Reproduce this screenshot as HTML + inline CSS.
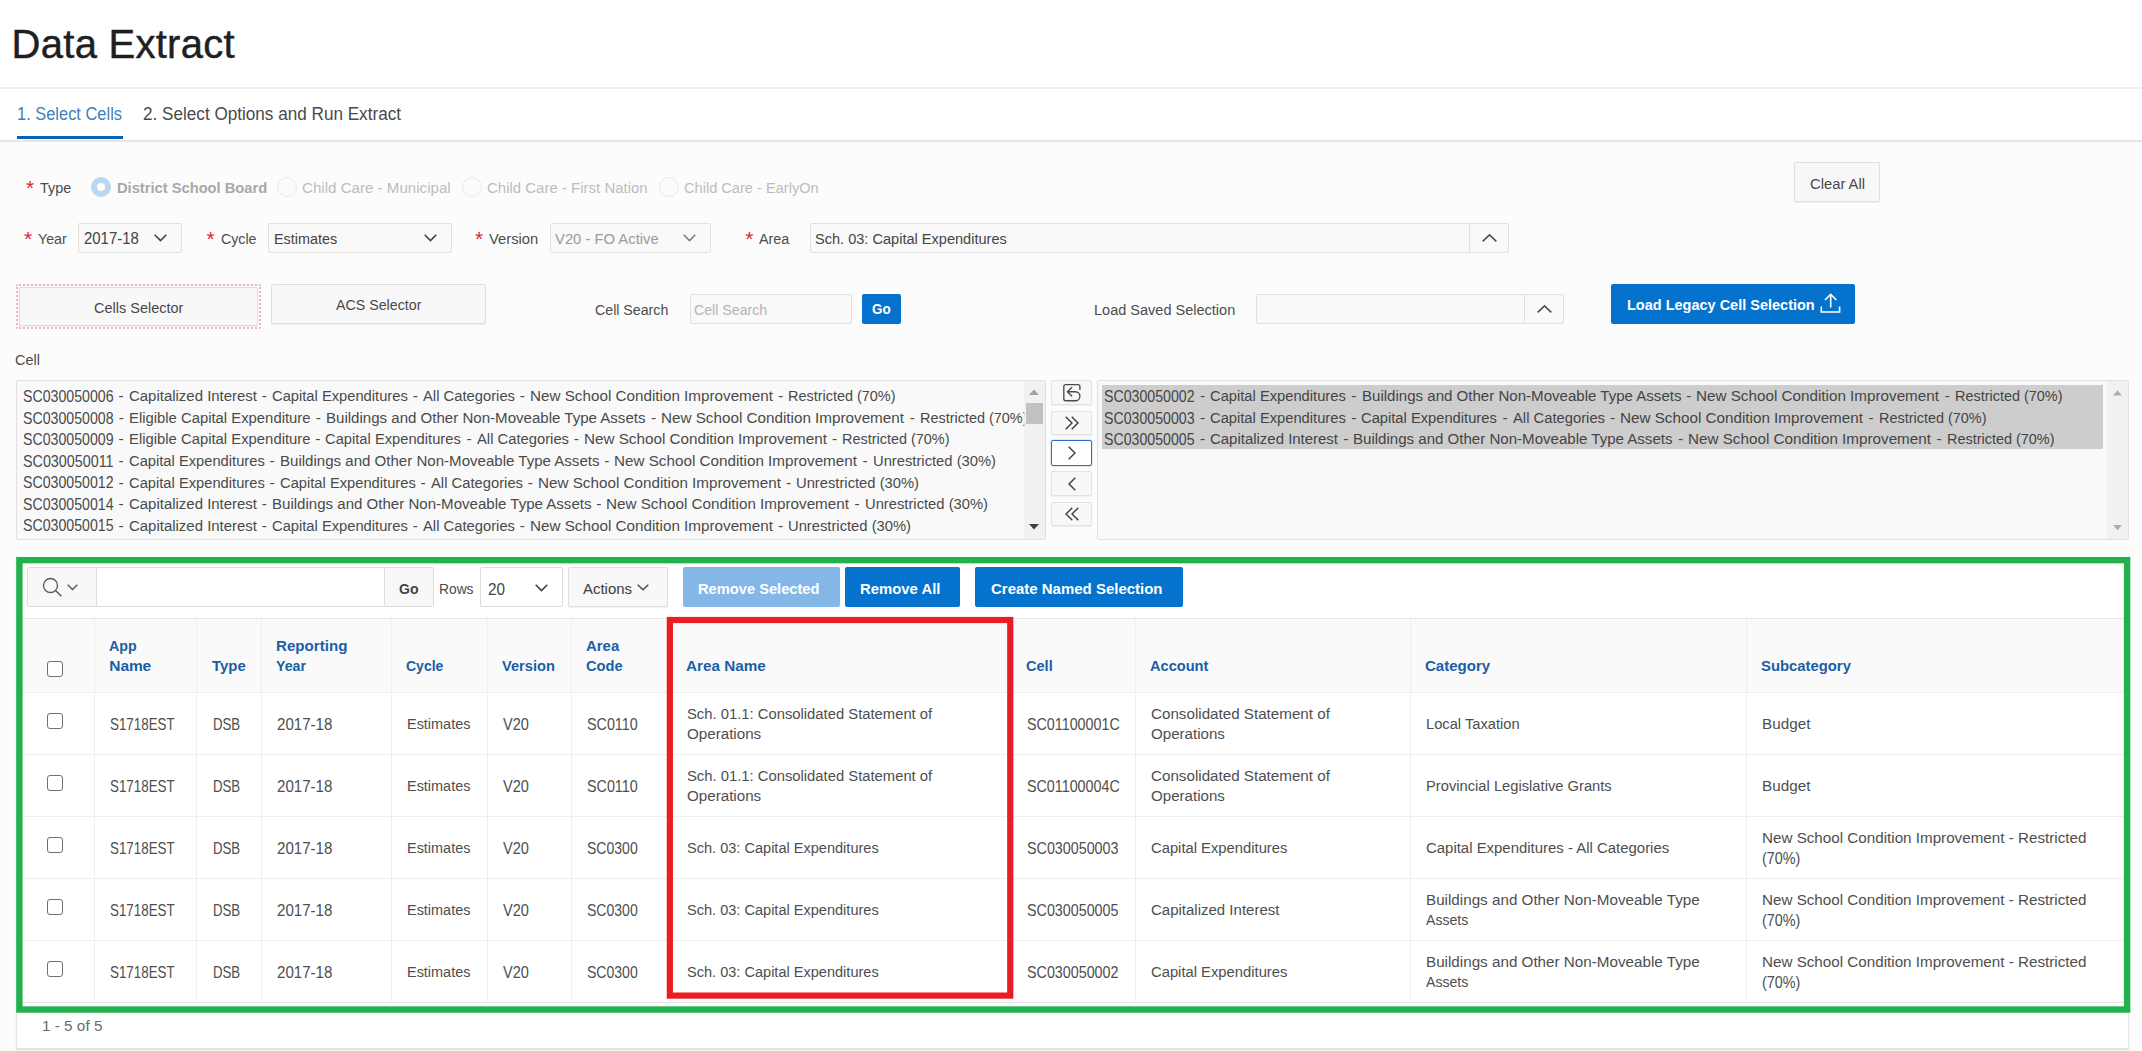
<!DOCTYPE html>
<html lang="en">
<head>
<meta charset="utf-8">
<title>Data Extract</title>
<style>
*{box-sizing:border-box;margin:0;padding:0}
html,body{width:2142px;height:1051px;overflow:hidden;background:#fff}
body{font-family:"Liberation Sans",sans-serif;color:#3c3c3c;font-size:15px;position:relative}
.a{position:absolute}
.t{position:absolute;white-space:nowrap;line-height:20px;height:20px}
.box{position:absolute;border:1px solid #e0e0e0;background:#f9f9f9;border-radius:2px}
.btn{position:absolute;border:1px solid #dedede;background:#f8f8f8;border-radius:2px;box-shadow:0 1px 1px rgba(0,0,0,.06)}
.hot{position:absolute;background:#0572ce;border-radius:2px}
.radio{position:absolute;width:20px;height:20px;border-radius:50%;border:1px solid #e9e9e9;background:#fbfbfb}
svg{position:absolute;overflow:visible}
.vl{position:absolute;width:1px;background:#efefef}
.hl{position:absolute;height:1px;background:#eeeeee}
.cb{position:absolute;width:16.6px;height:16.6px;border:1.4px solid #707070;border-radius:3px;background:#fff}
</style>
</head>
<body>

<!-- page header -->
<div class="a" style="left:0;top:87px;width:2142px;height:2px;background:#efefef"></div>
<div class="a" style="left:0;top:139.5px;width:2142px;height:2px;background:#e6e6e6"></div>
<div class="a" style="left:17px;top:136.2px;width:105.6px;height:3px;background:#0b62b3"></div>
<div class="a" style="left:0;top:141.5px;width:2142px;height:910px;background:#fcfcfc"></div>

<!-- row 1: type radios -->
<div class="radio" style="left:91px;top:177px;border:6.4px solid #b9d7f1;background:#fff"></div>
<div class="radio" style="left:277px;top:177px"></div>
<div class="radio" style="left:461.5px;top:177px"></div>
<div class="radio" style="left:658.5px;top:177px"></div>
<div class="btn" style="left:1794px;top:162px;width:86px;height:40px"></div>

<!-- row 2: selects -->
<div class="box" style="left:78px;top:223px;width:104px;height:30px"></div>
<svg style="left:154px;top:234px" width="13" height="8" viewBox="0 0 13 8"><path d="M0.7 0.7 L6.5 6.6 L12.3 0.7" fill="none" stroke="#3f3f3f" stroke-width="1.5"/></svg>
<div class="box" style="left:268px;top:223px;width:183.5px;height:30px"></div>
<svg style="left:424px;top:234px" width="13" height="8" viewBox="0 0 13 8"><path d="M0.7 0.7 L6.5 6.6 L12.3 0.7" fill="none" stroke="#3f3f3f" stroke-width="1.5"/></svg>
<div class="box" style="left:550px;top:223px;width:161px;height:30px;border-color:#e4e4e4"></div>
<svg style="left:683px;top:234px" width="13" height="8" viewBox="0 0 13 8"><path d="M0.7 0.7 L6.5 6.6 L12.3 0.7" fill="none" stroke="#7a7a7a" stroke-width="1.5"/></svg>
<div class="box" style="left:809.5px;top:223px;width:699.5px;height:30px"></div>
<div class="a" style="left:1469px;top:224px;width:1px;height:28px;background:#dedede"></div>
<svg style="left:1482px;top:234px" width="15" height="8" viewBox="0 0 15 8"><path d="M0.7 7.4 L7.5 0.9 L14.3 7.4" fill="none" stroke="#4a4a4a" stroke-width="1.5"/></svg>

<!-- row 3 -->
<div class="a" style="left:15.5px;top:284px;width:245px;height:45px;border:2px dotted #f4b0c3;border-radius:2px"></div>
<div class="btn" style="left:18.5px;top:287px;width:239px;height:39px"></div>
<div class="btn" style="left:271px;top:284px;width:215px;height:40px"></div>
<div class="box" style="left:689.5px;top:294px;width:162px;height:30px"></div>
<div class="hot" style="left:861.5px;top:294px;width:39.5px;height:30px"></div>
<div class="box" style="left:1255.5px;top:294px;width:308px;height:30px"></div>
<div class="a" style="left:1524px;top:295px;width:1px;height:28px;background:#dedede"></div>
<svg style="left:1536.5px;top:305px" width="15" height="8" viewBox="0 0 15 8"><path d="M0.7 7.4 L7.5 0.9 L14.3 7.4" fill="none" stroke="#4a4a4a" stroke-width="1.5"/></svg>
<div class="hot" style="left:1610.5px;top:283.5px;width:244.5px;height:40.5px"></div>
<svg style="left:1819.5px;top:293px" width="21" height="20" viewBox="0 0 21 20"><path d="M10.7 14.6 V1.4 M5 7 L10.7 1.3 L16.4 7 M1.3 13.4 V19 H19.6 V13.4" fill="none" stroke="#fff" stroke-width="1.6"/></svg>

<!-- shuttle lists -->
<div class="box" style="left:15.5px;top:380px;width:1030.5px;height:160px;border-color:#e0e0e0"></div>
<div class="a" style="left:1024px;top:381px;width:21px;height:158px;background:#f1f1f1"></div>
<div class="a" style="left:1026px;top:402.5px;width:16.5px;height:21.5px;background:#c1c1c1"></div>
<svg style="left:1029px;top:389px" width="10" height="6" viewBox="0 0 10 6"><path d="M0 6 L5 0.5 L10 6 Z" fill="#a3a3a3"/></svg>
<svg style="left:1029px;top:524px" width="10" height="6" viewBox="0 0 10 6"><path d="M0 0 L5 5.5 L10 0 Z" fill="#404040"/></svg>

<div class="btn" style="left:1051.3px;top:380.4px;width:40.6px;height:24.6px;border-color:#e2e2e2"></div>
<div class="btn" style="left:1051.3px;top:410.6px;width:40.6px;height:24.4px;border-color:#e2e2e2"></div>
<div class="btn" style="left:1051.3px;top:440.4px;width:40.6px;height:25.2px;border:1.5px solid #2d6fbd;background:#fff;box-shadow:0 0 2px #8db8e8"></div>
<div class="btn" style="left:1051.3px;top:471.4px;width:40.6px;height:24.6px;border-color:#e2e2e2"></div>
<div class="btn" style="left:1051.3px;top:501.5px;width:40.6px;height:24.7px;border-color:#e2e2e2"></div>
<svg style="left:1062px;top:383px" width="20" height="20" viewBox="0 0 20 20"><path d="M17.9 6.5 V3.6 Q17.9 1.65 15.9 1.65 H3.8 Q1.8 1.65 1.8 3.6 V15.8 Q1.8 17.75 3.8 17.75 H13.4 A4.5 4.5 0 0 0 13.4 8.7 H5.6 M9.7 4.4 L5.4 8.7 L9.7 13" fill="none" stroke="#4a4a4a" stroke-width="1.35" stroke-linecap="round" stroke-linejoin="round"/></svg>
<svg style="left:1064.5px;top:415.5px" width="14" height="14" viewBox="0 0 14 14"><path d="M0.7 0.7 L7 7 L0.7 13.3 M6.7 0.7 L13 7 L6.7 13.3" fill="none" stroke="#3d3d3d" stroke-width="1.4"/></svg>
<svg style="left:1068px;top:446px" width="8" height="14" viewBox="0 0 8 14"><path d="M0.7 0.7 L7 7 L0.7 13.3" fill="none" stroke="#3d3d3d" stroke-width="1.4"/></svg>
<svg style="left:1067.5px;top:476.5px" width="8" height="14" viewBox="0 0 8 14"><path d="M7.3 0.7 L1 7 L7.3 13.3" fill="none" stroke="#3d3d3d" stroke-width="1.4"/></svg>
<svg style="left:1064.5px;top:507px" width="14" height="14" viewBox="0 0 14 14"><path d="M7.3 0.7 L1 7 L7.3 13.3 M13.3 0.7 L7 7 L13.3 13.3" fill="none" stroke="#3d3d3d" stroke-width="1.4"/></svg>

<div class="box" style="left:1097px;top:380px;width:1032px;height:160px;border-color:#e0e0e0"></div>
<div class="a" style="left:1101.5px;top:385px;width:1001.5px;height:64.4px;background:#cdcdcd"></div>
<div class="a" style="left:2107px;top:381px;width:21px;height:158px;background:#f1f1f1"></div>
<svg style="left:2113px;top:390px" width="9" height="5.5" viewBox="0 0 9 5.5"><path d="M0 5.5 L4.5 0.3 L9 5.5 Z" fill="#adadad"/></svg>
<svg style="left:2113px;top:525.3px" width="9" height="5.5" viewBox="0 0 9 5.5"><path d="M0 0 L4.5 5.2 L9 0 Z" fill="#adadad"/></svg>

<!-- report region -->
<div class="a" style="left:15.5px;top:556px;width:2113.5px;height:494px;background:#fff;border:1.5px solid #e8e8e8;border-top:none;border-bottom:2px solid #e2e2e2;box-shadow:0 1px 2px rgba(0,0,0,.06)"></div>
<!-- toolbar -->
<div class="box" style="left:27px;top:567.4px;width:407px;height:40px;background:#fff;border-color:#dcdcdc"></div>
<div class="a" style="left:28px;top:568.4px;width:69px;height:38px;background:#f8f8f8;border-right:1px solid #dcdcdc"></div>
<div class="a" style="left:384px;top:568.4px;width:49px;height:38px;background:#f8f8f8;border-left:1px solid #dcdcdc"></div>
<svg style="left:41.5px;top:578px" width="20" height="20" viewBox="0 0 20 20"><circle cx="8.5" cy="7.5" r="7" fill="none" stroke="#595959" stroke-width="1.3"/><path d="M13.5 12.5 L19.4 18.3" stroke="#595959" stroke-width="1.5" fill="none"/></svg>
<svg style="left:66.5px;top:584px" width="11" height="7" viewBox="0 0 11 7"><path d="M0.7 0.7 L5.5 5.6 L10.3 0.7" fill="none" stroke="#555" stroke-width="1.4"/></svg>
<div class="box" style="left:479.5px;top:567.4px;width:83.5px;height:40px;background:#fff;border-color:#dcdcdc"></div>
<svg style="left:535px;top:583.5px" width="13" height="8" viewBox="0 0 13 8"><path d="M0.7 0.7 L6.5 6.6 L12.3 0.7" fill="none" stroke="#3f3f3f" stroke-width="1.5"/></svg>
<div class="btn" style="left:568px;top:567.4px;width:99.5px;height:40px"></div>
<svg style="left:637px;top:584px" width="12" height="7" viewBox="0 0 12 7"><path d="M0.7 0.7 L6 5.8 L11.3 0.7" fill="none" stroke="#4a4a4a" stroke-width="1.4"/></svg>
<div class="hot" style="left:683px;top:567.3px;width:157px;height:40px;background:#84b7e7"></div>
<div class="hot" style="left:845px;top:567.3px;width:115px;height:40px"></div>
<div class="hot" style="left:975px;top:567.3px;width:208px;height:40px"></div>

<!-- table -->
<div class="a" style="left:23px;top:618.5px;width:2101px;height:73.5px;background:#fafafa"></div>
<div class="hl" style="left:23px;top:618px;width:2101px;background:#e6e6e6"></div>
<div class="hl" style="left:23px;top:691.5px;width:2101px"></div>
<div class="hl" style="left:23px;top:753.5px;width:2101px"></div>
<div class="hl" style="left:23px;top:815.5px;width:2101px"></div>
<div class="hl" style="left:23px;top:877.5px;width:2101px"></div>
<div class="hl" style="left:23px;top:939.5px;width:2101px"></div>
<div class="hl" style="left:23px;top:1001.7px;width:2101px;background:#e2e2e2"></div>
<div class="vl" style="left:94px;top:619px;height:383px"></div>
<div class="vl" style="left:196px;top:619px;height:383px"></div>
<div class="vl" style="left:261px;top:619px;height:383px"></div>
<div class="vl" style="left:391px;top:619px;height:383px"></div>
<div class="vl" style="left:487px;top:619px;height:383px"></div>
<div class="vl" style="left:571px;top:619px;height:383px"></div>
<div class="vl" style="left:1135px;top:619px;height:383px"></div>
<div class="vl" style="left:1410px;top:619px;height:383px"></div>
<div class="vl" style="left:1746px;top:619px;height:383px"></div>
<div class="cb" style="left:46.5px;top:660.5px"></div>
<div class="cb" style="left:46.5px;top:712.8px"></div>
<div class="cb" style="left:46.5px;top:774.8px"></div>
<div class="cb" style="left:46.5px;top:836.8px"></div>
<div class="cb" style="left:46.5px;top:898.8px"></div>
<div class="cb" style="left:46.5px;top:960.8px"></div>

<!-- annotation boxes -->
<svg style="left:0;top:0" width="2142" height="1051" viewBox="0 0 2142 1051"><rect x="19.4" y="560.15" width="2107.7" height="449.4" fill="none" stroke="#22b14c" stroke-width="6.4"/><rect x="669.85" y="620" width="340.4" height="375.6" fill="none" stroke="#ec1c24" stroke-width="6.2"/></svg>


<div class="t" id="t0" style="left:11.60px;top:19.04px;font-size:40px;line-height:50px;height:50px;color:#1f1f1f;letter-spacing:0.266px;-webkit-text-stroke:0.45px #1f1f1f;">Data Extract</div>
<div class="t" id="t1" style="left:17.20px;top:104.24px;font-size:17.5px;color:#3f7fbb;transform:scaleX(0.9387);transform-origin:0 50%;">1. Select Cells</div>
<div class="t" id="t2" style="left:143.00px;top:104.24px;font-size:17.5px;color:#4a4a4a;transform:scaleX(0.9787);transform-origin:0 50%;">2. Select Options and Run Extract</div>
<div class="t" id="t3" style="left:26.00px;top:177.92px;font-size:21px;color:#df1f3c;">*</div>
<div class="t" id="t4" style="left:40.00px;top:177.73px;font-size:15.5px;color:#4c4c4c;transform:scaleX(0.9313);transform-origin:0 50%;">Type</div>
<div class="t" id="t5" style="left:116.50px;top:177.73px;font-size:15.5px;font-weight:700;color:#a8a8a8;transform:scaleX(0.9478);transform-origin:0 50%;">District School Board</div>
<div class="t" id="t6" style="left:302.30px;top:177.73px;font-size:15.5px;color:#bcbcbc;transform:scaleX(0.9752);transform-origin:0 50%;">Child Care - Municipal</div>
<div class="t" id="t7" style="left:487.00px;top:177.73px;font-size:15.5px;color:#bcbcbc;transform:scaleX(0.9666);transform-origin:0 50%;">Child Care - First Nation</div>
<div class="t" id="t8" style="left:684.30px;top:177.73px;font-size:15.5px;color:#bcbcbc;transform:scaleX(0.9420);transform-origin:0 50%;">Child Care - EarlyOn</div>
<div class="t" id="t9" style="left:1809.50px;top:173.83px;font-size:15.5px;color:#484848;transform:scaleX(0.9529);transform-origin:0 50%;">Clear All</div>
<div class="t" id="t10" style="left:24.00px;top:228.92px;font-size:21px;color:#df1f3c;">*</div>
<div class="t" id="t11" style="left:37.50px;top:228.73px;font-size:15.5px;color:#4c4c4c;transform:scaleX(0.9161);transform-origin:0 50%;">Year</div>
<div class="t" id="t12" style="left:84.00px;top:228.49px;font-size:16.2px;color:#444;transform:scaleX(0.9222);transform-origin:0 50%;">2017-18</div>
<div class="t" id="t13" style="left:206.50px;top:228.92px;font-size:21px;color:#df1f3c;">*</div>
<div class="t" id="t14" style="left:220.50px;top:228.73px;font-size:15.5px;color:#4c4c4c;transform:scaleX(0.9158);transform-origin:0 50%;">Cycle</div>
<div class="t" id="t15" style="left:273.50px;top:228.73px;font-size:15.5px;color:#444;transform:scaleX(0.9286);transform-origin:0 50%;">Estimates</div>
<div class="t" id="t16" style="left:475.00px;top:228.92px;font-size:21px;color:#df1f3c;">*</div>
<div class="t" id="t17" style="left:488.50px;top:228.73px;font-size:15.5px;color:#4c4c4c;transform:scaleX(0.9535);transform-origin:0 50%;">Version</div>
<div class="t" id="t18" style="left:555.30px;top:228.73px;font-size:15.5px;color:#9b9b9b;transform:scaleX(0.9553);transform-origin:0 50%;">V20 - FO Active</div>
<div class="t" id="t19" style="left:745.30px;top:228.92px;font-size:21px;color:#df1f3c;">*</div>
<div class="t" id="t20" style="left:759.00px;top:228.73px;font-size:15.5px;color:#4c4c4c;transform:scaleX(0.9252);transform-origin:0 50%;">Area</div>
<div class="t" id="t21" style="left:814.70px;top:228.73px;font-size:15.5px;color:#444;transform:scaleX(0.9393);transform-origin:0 50%;">Sch. 03: Capital Expenditures</div>
<div class="t" id="t22" style="left:93.60px;top:297.53px;font-size:15.5px;color:#484848;transform:scaleX(0.9349);transform-origin:0 50%;">Cells Selector</div>
<div class="t" id="t23" style="left:336.30px;top:294.73px;font-size:15.5px;color:#484848;transform:scaleX(0.9178);transform-origin:0 50%;">ACS Selector</div>
<div class="t" id="t24" style="left:595.30px;top:299.73px;font-size:15.5px;color:#4c4c4c;transform:scaleX(0.9148);transform-origin:0 50%;">Cell Search</div>
<div class="t" id="t25" style="left:694.00px;top:299.73px;font-size:15.5px;color:#b4b4b4;transform:scaleX(0.9136);transform-origin:0 50%;">Cell Search</div>
<div class="t" id="t26" style="left:872.00px;top:299.23px;font-size:15.5px;font-weight:700;color:#fff;transform:scaleX(0.8685);transform-origin:0 50%;">Go</div>
<div class="t" id="t27" style="left:1094.00px;top:299.73px;font-size:15.5px;color:#4c4c4c;transform:scaleX(0.9363);transform-origin:0 50%;">Load Saved Selection</div>
<div class="t" id="t28" style="left:1626.50px;top:294.63px;font-size:15.5px;font-weight:700;color:#fff;transform:scaleX(0.9352);transform-origin:0 50%;">Load Legacy Cell Selection</div>
<div class="t" id="t29" style="left:15.30px;top:350.23px;font-size:15.5px;color:#4c4c4c;transform:scaleX(0.9325);transform-origin:0 50%;">Cell</div>
<div class="t" id="t30" style="left:22.80px;top:386.19px;font-size:16.2px;color:#4a4a4a;transform:scaleX(0.8743);transform-origin:0 50%;">SC030050006</div>
<div class="t" id="t31" style="left:118.41px;top:386.43px;font-size:15.5px;color:#4a4a4a;">-</div>
<div class="t" id="t32" style="left:128.52px;top:386.43px;font-size:15.5px;color:#4a4a4a;transform:scaleX(0.9647);transform-origin:0 50%;">Capitalized Interest</div>
<div class="t" id="t33" style="left:261.63px;top:386.43px;font-size:15.5px;color:#4a4a4a;">-</div>
<div class="t" id="t34" style="left:271.74px;top:386.43px;font-size:15.5px;color:#4a4a4a;transform:scaleX(0.9494);transform-origin:0 50%;">Capital Expenditures</div>
<div class="t" id="t35" style="left:412.65px;top:386.43px;font-size:15.5px;color:#4a4a4a;">-</div>
<div class="t" id="t36" style="left:422.76px;top:386.43px;font-size:15.5px;color:#4a4a4a;transform:scaleX(0.9534);transform-origin:0 50%;">All Categories</div>
<div class="t" id="t37" style="left:519.87px;top:386.43px;font-size:15.5px;color:#4a4a4a;">-</div>
<div class="t" id="t38" style="left:529.98px;top:386.43px;font-size:15.5px;color:#4a4a4a;transform:scaleX(0.9827);transform-origin:0 50%;">New School Condition Improvement</div>
<div class="t" id="t39" style="left:778.09px;top:386.43px;font-size:15.5px;color:#4a4a4a;">-</div>
<div class="t" id="t40" style="left:788.20px;top:386.43px;font-size:15.5px;color:#4a4a4a;transform:scaleX(0.9312);transform-origin:0 50%;">Restricted (70%)</div>
<div class="t" id="t41" style="left:22.80px;top:407.69px;font-size:16.2px;color:#4a4a4a;transform:scaleX(0.8743);transform-origin:0 50%;">SC030050008</div>
<div class="t" id="t42" style="left:118.64px;top:407.93px;font-size:15.5px;color:#4a4a4a;">-</div>
<div class="t" id="t43" style="left:128.98px;top:407.93px;font-size:15.5px;color:#4a4a4a;transform:scaleX(0.9575);transform-origin:0 50%;">Eligible Capital Expenditure</div>
<div class="t" id="t44" style="left:315.81px;top:407.93px;font-size:15.5px;color:#4a4a4a;">-</div>
<div class="t" id="t45" style="left:326.15px;top:407.93px;font-size:15.5px;color:#4a4a4a;transform:scaleX(0.9715);transform-origin:0 50%;">Buildings and Other Non-Moveable Type Assets</div>
<div class="t" id="t46" style="left:650.99px;top:407.93px;font-size:15.5px;color:#4a4a4a;">-</div>
<div class="t" id="t47" style="left:661.33px;top:407.93px;font-size:15.5px;color:#4a4a4a;transform:scaleX(0.9827);transform-origin:0 50%;">New School Condition Improvement</div>
<div class="t" id="t48" style="left:909.66px;top:407.93px;font-size:15.5px;color:#4a4a4a;">-</div>
<div class="t" id="t49" style="left:920.00px;top:407.93px;font-size:15.5px;color:#4a4a4a;transform:scaleX(0.9312);transform-origin:0 50%;max-width:111.5px;overflow:hidden;">Restricted (70%)</div>
<div class="t" id="t50" style="left:22.80px;top:429.19px;font-size:16.2px;color:#4a4a4a;transform:scaleX(0.8743);transform-origin:0 50%;">SC030050009</div>
<div class="t" id="t51" style="left:118.46px;top:429.43px;font-size:15.5px;color:#4a4a4a;">-</div>
<div class="t" id="t52" style="left:128.62px;top:429.43px;font-size:15.5px;color:#4a4a4a;transform:scaleX(0.9575);transform-origin:0 50%;">Eligible Capital Expenditure</div>
<div class="t" id="t53" style="left:315.28px;top:429.43px;font-size:15.5px;color:#4a4a4a;">-</div>
<div class="t" id="t54" style="left:325.44px;top:429.43px;font-size:15.5px;color:#4a4a4a;transform:scaleX(0.9494);transform-origin:0 50%;">Capital Expenditures</div>
<div class="t" id="t55" style="left:466.40px;top:429.43px;font-size:15.5px;color:#4a4a4a;">-</div>
<div class="t" id="t56" style="left:476.56px;top:429.43px;font-size:15.5px;color:#4a4a4a;transform:scaleX(0.9534);transform-origin:0 50%;">All Categories</div>
<div class="t" id="t57" style="left:573.72px;top:429.43px;font-size:15.5px;color:#4a4a4a;">-</div>
<div class="t" id="t58" style="left:583.88px;top:429.43px;font-size:15.5px;color:#4a4a4a;transform:scaleX(0.9827);transform-origin:0 50%;">New School Condition Improvement</div>
<div class="t" id="t59" style="left:832.04px;top:429.43px;font-size:15.5px;color:#4a4a4a;">-</div>
<div class="t" id="t60" style="left:842.20px;top:429.43px;font-size:15.5px;color:#4a4a4a;transform:scaleX(0.9312);transform-origin:0 50%;">Restricted (70%)</div>
<div class="t" id="t61" style="left:22.80px;top:450.89px;font-size:16.2px;color:#4a4a4a;transform:scaleX(0.8845);transform-origin:0 50%;">SC030050011</div>
<div class="t" id="t62" style="left:118.44px;top:451.13px;font-size:15.5px;color:#4a4a4a;">-</div>
<div class="t" id="t63" style="left:128.58px;top:451.13px;font-size:15.5px;color:#4a4a4a;transform:scaleX(0.9494);transform-origin:0 50%;">Capital Expenditures</div>
<div class="t" id="t64" style="left:269.51px;top:451.13px;font-size:15.5px;color:#4a4a4a;">-</div>
<div class="t" id="t65" style="left:279.65px;top:451.13px;font-size:15.5px;color:#4a4a4a;transform:scaleX(0.9715);transform-origin:0 50%;">Buildings and Other Non-Moveable Type Assets</div>
<div class="t" id="t66" style="left:604.29px;top:451.13px;font-size:15.5px;color:#4a4a4a;">-</div>
<div class="t" id="t67" style="left:614.43px;top:451.13px;font-size:15.5px;color:#4a4a4a;transform:scaleX(0.9827);transform-origin:0 50%;">New School Condition Improvement</div>
<div class="t" id="t68" style="left:862.56px;top:451.13px;font-size:15.5px;color:#4a4a4a;">-</div>
<div class="t" id="t69" style="left:872.70px;top:451.13px;font-size:15.5px;color:#4a4a4a;transform:scaleX(0.9519);transform-origin:0 50%;">Unrestricted (30%)</div>
<div class="t" id="t70" style="left:22.80px;top:472.39px;font-size:16.2px;color:#4a4a4a;transform:scaleX(0.8743);transform-origin:0 50%;">SC030050012</div>
<div class="t" id="t71" style="left:118.43px;top:472.63px;font-size:15.5px;color:#4a4a4a;">-</div>
<div class="t" id="t72" style="left:128.56px;top:472.63px;font-size:15.5px;color:#4a4a4a;transform:scaleX(0.9494);transform-origin:0 50%;">Capital Expenditures</div>
<div class="t" id="t73" style="left:269.49px;top:472.63px;font-size:15.5px;color:#4a4a4a;">-</div>
<div class="t" id="t74" style="left:279.62px;top:472.63px;font-size:15.5px;color:#4a4a4a;transform:scaleX(0.9494);transform-origin:0 50%;">Capital Expenditures</div>
<div class="t" id="t75" style="left:420.55px;top:472.63px;font-size:15.5px;color:#4a4a4a;">-</div>
<div class="t" id="t76" style="left:430.68px;top:472.63px;font-size:15.5px;color:#4a4a4a;transform:scaleX(0.9534);transform-origin:0 50%;">All Categories</div>
<div class="t" id="t77" style="left:527.81px;top:472.63px;font-size:15.5px;color:#4a4a4a;">-</div>
<div class="t" id="t78" style="left:537.94px;top:472.63px;font-size:15.5px;color:#4a4a4a;transform:scaleX(0.9827);transform-origin:0 50%;">New School Condition Improvement</div>
<div class="t" id="t79" style="left:786.07px;top:472.63px;font-size:15.5px;color:#4a4a4a;">-</div>
<div class="t" id="t80" style="left:796.20px;top:472.63px;font-size:15.5px;color:#4a4a4a;transform:scaleX(0.9519);transform-origin:0 50%;">Unrestricted (30%)</div>
<div class="t" id="t81" style="left:22.80px;top:493.89px;font-size:16.2px;color:#4a4a4a;transform:scaleX(0.8743);transform-origin:0 50%;">SC030050014</div>
<div class="t" id="t82" style="left:118.41px;top:494.13px;font-size:15.5px;color:#4a4a4a;">-</div>
<div class="t" id="t83" style="left:128.53px;top:494.13px;font-size:15.5px;color:#4a4a4a;transform:scaleX(0.9647);transform-origin:0 50%;">Capitalized Interest</div>
<div class="t" id="t84" style="left:261.64px;top:494.13px;font-size:15.5px;color:#4a4a4a;">-</div>
<div class="t" id="t85" style="left:271.75px;top:494.13px;font-size:15.5px;color:#4a4a4a;transform:scaleX(0.9715);transform-origin:0 50%;">Buildings and Other Non-Moveable Type Assets</div>
<div class="t" id="t86" style="left:596.36px;top:494.13px;font-size:15.5px;color:#4a4a4a;">-</div>
<div class="t" id="t87" style="left:606.48px;top:494.13px;font-size:15.5px;color:#4a4a4a;transform:scaleX(0.9827);transform-origin:0 50%;">New School Condition Improvement</div>
<div class="t" id="t88" style="left:854.59px;top:494.13px;font-size:15.5px;color:#4a4a4a;">-</div>
<div class="t" id="t89" style="left:864.70px;top:494.13px;font-size:15.5px;color:#4a4a4a;transform:scaleX(0.9519);transform-origin:0 50%;">Unrestricted (30%)</div>
<div class="t" id="t90" style="left:22.80px;top:515.49px;font-size:16.2px;color:#4a4a4a;transform:scaleX(0.8743);transform-origin:0 50%;">SC030050015</div>
<div class="t" id="t91" style="left:118.41px;top:515.73px;font-size:15.5px;color:#4a4a4a;">-</div>
<div class="t" id="t92" style="left:128.52px;top:515.73px;font-size:15.5px;color:#4a4a4a;transform:scaleX(0.9647);transform-origin:0 50%;">Capitalized Interest</div>
<div class="t" id="t93" style="left:261.63px;top:515.73px;font-size:15.5px;color:#4a4a4a;">-</div>
<div class="t" id="t94" style="left:271.74px;top:515.73px;font-size:15.5px;color:#4a4a4a;transform:scaleX(0.9494);transform-origin:0 50%;">Capital Expenditures</div>
<div class="t" id="t95" style="left:412.65px;top:515.73px;font-size:15.5px;color:#4a4a4a;">-</div>
<div class="t" id="t96" style="left:422.76px;top:515.73px;font-size:15.5px;color:#4a4a4a;transform:scaleX(0.9534);transform-origin:0 50%;">All Categories</div>
<div class="t" id="t97" style="left:519.87px;top:515.73px;font-size:15.5px;color:#4a4a4a;">-</div>
<div class="t" id="t98" style="left:529.98px;top:515.73px;font-size:15.5px;color:#4a4a4a;transform:scaleX(0.9827);transform-origin:0 50%;">New School Condition Improvement</div>
<div class="t" id="t99" style="left:778.09px;top:515.73px;font-size:15.5px;color:#4a4a4a;">-</div>
<div class="t" id="t100" style="left:788.20px;top:515.73px;font-size:15.5px;color:#4a4a4a;transform:scaleX(0.9519);transform-origin:0 50%;">Unrestricted (30%)</div>
<div class="t" id="t101" style="left:1104.30px;top:386.19px;font-size:16.2px;color:#444;transform:scaleX(0.8743);transform-origin:0 50%;">SC030050002</div>
<div class="t" id="t102" style="left:1200.03px;top:386.43px;font-size:15.5px;color:#444;">-</div>
<div class="t" id="t103" style="left:1210.25px;top:386.43px;font-size:15.5px;color:#444;transform:scaleX(0.9494);transform-origin:0 50%;">Capital Expenditures</div>
<div class="t" id="t104" style="left:1351.28px;top:386.43px;font-size:15.5px;color:#444;">-</div>
<div class="t" id="t105" style="left:1361.50px;top:386.43px;font-size:15.5px;color:#444;transform:scaleX(0.9715);transform-origin:0 50%;">Buildings and Other Non-Moveable Type Assets</div>
<div class="t" id="t106" style="left:1686.22px;top:386.43px;font-size:15.5px;color:#444;">-</div>
<div class="t" id="t107" style="left:1696.45px;top:386.43px;font-size:15.5px;color:#444;transform:scaleX(0.9827);transform-origin:0 50%;">New School Condition Improvement</div>
<div class="t" id="t108" style="left:1944.68px;top:386.43px;font-size:15.5px;color:#444;">-</div>
<div class="t" id="t109" style="left:1954.90px;top:386.43px;font-size:15.5px;color:#444;transform:scaleX(0.9312);transform-origin:0 50%;">Restricted (70%)</div>
<div class="t" id="t110" style="left:1104.30px;top:407.69px;font-size:16.2px;color:#444;transform:scaleX(0.8743);transform-origin:0 50%;">SC030050003</div>
<div class="t" id="t111" style="left:1200.02px;top:407.93px;font-size:15.5px;color:#444;">-</div>
<div class="t" id="t112" style="left:1210.24px;top:407.93px;font-size:15.5px;color:#444;transform:scaleX(0.9494);transform-origin:0 50%;">Capital Expenditures</div>
<div class="t" id="t113" style="left:1351.26px;top:407.93px;font-size:15.5px;color:#444;">-</div>
<div class="t" id="t114" style="left:1361.48px;top:407.93px;font-size:15.5px;color:#444;transform:scaleX(0.9494);transform-origin:0 50%;">Capital Expenditures</div>
<div class="t" id="t115" style="left:1502.50px;top:407.93px;font-size:15.5px;color:#444;">-</div>
<div class="t" id="t116" style="left:1512.72px;top:407.93px;font-size:15.5px;color:#444;transform:scaleX(0.9534);transform-origin:0 50%;">All Categories</div>
<div class="t" id="t117" style="left:1609.94px;top:407.93px;font-size:15.5px;color:#444;">-</div>
<div class="t" id="t118" style="left:1620.16px;top:407.93px;font-size:15.5px;color:#444;transform:scaleX(0.9827);transform-origin:0 50%;">New School Condition Improvement</div>
<div class="t" id="t119" style="left:1868.38px;top:407.93px;font-size:15.5px;color:#444;">-</div>
<div class="t" id="t120" style="left:1878.60px;top:407.93px;font-size:15.5px;color:#444;transform:scaleX(0.9312);transform-origin:0 50%;">Restricted (70%)</div>
<div class="t" id="t121" style="left:1104.30px;top:429.19px;font-size:16.2px;color:#444;transform:scaleX(0.8743);transform-origin:0 50%;">SC030050005</div>
<div class="t" id="t122" style="left:1199.96px;top:429.43px;font-size:15.5px;color:#444;">-</div>
<div class="t" id="t123" style="left:1210.12px;top:429.43px;font-size:15.5px;color:#444;transform:scaleX(0.9647);transform-origin:0 50%;">Capitalized Interest</div>
<div class="t" id="t124" style="left:1343.29px;top:429.43px;font-size:15.5px;color:#444;">-</div>
<div class="t" id="t125" style="left:1353.45px;top:429.43px;font-size:15.5px;color:#444;transform:scaleX(0.9715);transform-origin:0 50%;">Buildings and Other Non-Moveable Type Assets</div>
<div class="t" id="t126" style="left:1678.11px;top:429.43px;font-size:15.5px;color:#444;">-</div>
<div class="t" id="t127" style="left:1688.28px;top:429.43px;font-size:15.5px;color:#444;transform:scaleX(0.9827);transform-origin:0 50%;">New School Condition Improvement</div>
<div class="t" id="t128" style="left:1936.44px;top:429.43px;font-size:15.5px;color:#444;">-</div>
<div class="t" id="t129" style="left:1946.60px;top:429.43px;font-size:15.5px;color:#444;transform:scaleX(0.9312);transform-origin:0 50%;">Restricted (70%)</div>
<div class="t" id="t130" style="left:398.50px;top:578.83px;font-size:15.5px;font-weight:700;color:#444;transform:scaleX(0.9057);transform-origin:0 50%;">Go</div>
<div class="t" id="t131" style="left:439.00px;top:578.83px;font-size:15.5px;color:#4c4c4c;transform:scaleX(0.8900);transform-origin:0 50%;">Rows</div>
<div class="t" id="t132" style="left:487.50px;top:578.59px;font-size:16.2px;color:#444;transform:scaleX(0.9436);transform-origin:0 50%;">20</div>
<div class="t" id="t133" style="left:583.00px;top:578.83px;font-size:15.5px;color:#3c3c3c;transform:scaleX(0.9637);transform-origin:0 50%;">Actions</div>
<div class="t" id="t134" style="left:698.00px;top:578.83px;font-size:15.5px;font-weight:700;color:#fff;transform:scaleX(0.9464);transform-origin:0 50%;">Remove Selected</div>
<div class="t" id="t135" style="left:860.00px;top:578.83px;font-size:15.5px;font-weight:700;color:#fff;transform:scaleX(0.9601);transform-origin:0 50%;">Remove All</div>
<div class="t" id="t136" style="left:991.00px;top:578.83px;font-size:15.5px;font-weight:700;color:#fff;transform:scaleX(0.9664);transform-origin:0 50%;">Create Named Selection</div>
<div class="t" id="t137" style="left:109.30px;top:635.73px;font-size:15.5px;font-weight:700;color:#1b5ea6;transform:scaleX(0.9190);transform-origin:0 50%;">App</div>
<div class="t" id="t138" style="left:109.30px;top:655.73px;font-size:15.5px;font-weight:700;color:#1b5ea6;letter-spacing:-0.106px;">Name</div>
<div class="t" id="t139" style="left:212.00px;top:655.73px;font-size:15.5px;font-weight:700;color:#1b5ea6;transform:scaleX(0.9620);transform-origin:0 50%;">Type</div>
<div class="t" id="t140" style="left:276.30px;top:635.73px;font-size:15.5px;font-weight:700;color:#1b5ea6;transform:scaleX(0.9756);transform-origin:0 50%;">Reporting</div>
<div class="t" id="t141" style="left:276.30px;top:655.73px;font-size:15.5px;font-weight:700;color:#1b5ea6;transform:scaleX(0.9125);transform-origin:0 50%;">Year</div>
<div class="t" id="t142" style="left:406.30px;top:655.73px;font-size:15.5px;font-weight:700;color:#1b5ea6;transform:scaleX(0.9039);transform-origin:0 50%;">Cycle</div>
<div class="t" id="t143" style="left:502.30px;top:655.73px;font-size:15.5px;font-weight:700;color:#1b5ea6;transform:scaleX(0.9446);transform-origin:0 50%;">Version</div>
<div class="t" id="t144" style="left:586.00px;top:635.73px;font-size:15.5px;font-weight:700;color:#1b5ea6;transform:scaleX(0.9632);transform-origin:0 50%;">Area</div>
<div class="t" id="t145" style="left:586.00px;top:655.73px;font-size:15.5px;font-weight:700;color:#1b5ea6;transform:scaleX(0.9471);transform-origin:0 50%;">Code</div>
<div class="t" id="t146" style="left:686.00px;top:655.73px;font-size:15.5px;font-weight:700;color:#1b5ea6;transform:scaleX(0.9840);transform-origin:0 50%;">Area Name</div>
<div class="t" id="t147" style="left:1026.00px;top:655.73px;font-size:15.5px;font-weight:700;color:#1b5ea6;transform:scaleX(0.9389);transform-origin:0 50%;">Cell</div>
<div class="t" id="t148" style="left:1150.30px;top:655.73px;font-size:15.5px;font-weight:700;color:#1b5ea6;transform:scaleX(0.9419);transform-origin:0 50%;">Account</div>
<div class="t" id="t149" style="left:1425.00px;top:655.73px;font-size:15.5px;font-weight:700;color:#1b5ea6;transform:scaleX(0.9704);transform-origin:0 50%;">Category</div>
<div class="t" id="t150" style="left:1761.30px;top:655.73px;font-size:15.5px;font-weight:700;color:#1b5ea6;transform:scaleX(0.9575);transform-origin:0 50%;">Subcategory</div>
<div class="t" id="t151" style="left:110.00px;top:713.99px;font-size:16.2px;color:#4e4e4e;transform:scaleX(0.8263);transform-origin:0 50%;">S1718EST</div>
<div class="t" id="t152" style="left:213.00px;top:713.99px;font-size:16.2px;color:#4e4e4e;transform:scaleX(0.8169);transform-origin:0 50%;">DSB</div>
<div class="t" id="t153" style="left:277.30px;top:713.99px;font-size:16.2px;color:#4e4e4e;transform:scaleX(0.9323);transform-origin:0 50%;">2017-18</div>
<div class="t" id="t154" style="left:407.30px;top:714.23px;font-size:15.5px;color:#4e4e4e;transform:scaleX(0.9315);transform-origin:0 50%;">Estimates</div>
<div class="t" id="t155" style="left:503.30px;top:713.99px;font-size:16.2px;color:#4e4e4e;transform:scaleX(0.8989);transform-origin:0 50%;">V20</div>
<div class="t" id="t156" style="left:587.00px;top:713.99px;font-size:16.2px;color:#4e4e4e;transform:scaleX(0.8849);transform-origin:0 50%;">SC0110</div>
<div class="t" id="t157" style="left:687.00px;top:704.23px;font-size:15.5px;color:#4e4e4e;transform:scaleX(0.9549);transform-origin:0 50%;">Sch. 01.1: Consolidated Statement of</div>
<div class="t" id="t158" style="left:687.00px;top:724.23px;font-size:15.5px;color:#4e4e4e;transform:scaleX(0.9785);transform-origin:0 50%;">Operations</div>
<div class="t" id="t159" style="left:1027.00px;top:713.99px;font-size:16.2px;color:#4e4e4e;transform:scaleX(0.8829);transform-origin:0 50%;">SC01100001C</div>
<div class="t" id="t160" style="left:1151.30px;top:704.23px;font-size:15.5px;color:#4e4e4e;transform:scaleX(0.9794);transform-origin:0 50%;">Consolidated Statement of</div>
<div class="t" id="t161" style="left:1151.30px;top:724.23px;font-size:15.5px;color:#4e4e4e;transform:scaleX(0.9746);transform-origin:0 50%;">Operations</div>
<div class="t" id="t162" style="left:1426.00px;top:714.23px;font-size:15.5px;color:#4e4e4e;transform:scaleX(0.9483);transform-origin:0 50%;">Local Taxation</div>
<div class="t" id="t163" style="left:1762.30px;top:714.23px;font-size:15.5px;color:#4e4e4e;transform:scaleX(0.9849);transform-origin:0 50%;">Budget</div>
<div class="t" id="t164" style="left:110.00px;top:775.99px;font-size:16.2px;color:#4e4e4e;transform:scaleX(0.8263);transform-origin:0 50%;">S1718EST</div>
<div class="t" id="t165" style="left:213.00px;top:775.99px;font-size:16.2px;color:#4e4e4e;transform:scaleX(0.8169);transform-origin:0 50%;">DSB</div>
<div class="t" id="t166" style="left:277.30px;top:775.99px;font-size:16.2px;color:#4e4e4e;transform:scaleX(0.9323);transform-origin:0 50%;">2017-18</div>
<div class="t" id="t167" style="left:407.30px;top:776.23px;font-size:15.5px;color:#4e4e4e;transform:scaleX(0.9315);transform-origin:0 50%;">Estimates</div>
<div class="t" id="t168" style="left:503.30px;top:775.99px;font-size:16.2px;color:#4e4e4e;transform:scaleX(0.8989);transform-origin:0 50%;">V20</div>
<div class="t" id="t169" style="left:587.00px;top:775.99px;font-size:16.2px;color:#4e4e4e;transform:scaleX(0.8849);transform-origin:0 50%;">SC0110</div>
<div class="t" id="t170" style="left:687.00px;top:766.23px;font-size:15.5px;color:#4e4e4e;transform:scaleX(0.9549);transform-origin:0 50%;">Sch. 01.1: Consolidated Statement of</div>
<div class="t" id="t171" style="left:687.00px;top:786.23px;font-size:15.5px;color:#4e4e4e;transform:scaleX(0.9785);transform-origin:0 50%;">Operations</div>
<div class="t" id="t172" style="left:1027.00px;top:775.99px;font-size:16.2px;color:#4e4e4e;transform:scaleX(0.8829);transform-origin:0 50%;">SC01100004C</div>
<div class="t" id="t173" style="left:1151.30px;top:766.23px;font-size:15.5px;color:#4e4e4e;transform:scaleX(0.9794);transform-origin:0 50%;">Consolidated Statement of</div>
<div class="t" id="t174" style="left:1151.30px;top:786.23px;font-size:15.5px;color:#4e4e4e;transform:scaleX(0.9746);transform-origin:0 50%;">Operations</div>
<div class="t" id="t175" style="left:1426.00px;top:776.23px;font-size:15.5px;color:#4e4e4e;transform:scaleX(0.9496);transform-origin:0 50%;">Provincial Legislative Grants</div>
<div class="t" id="t176" style="left:1762.30px;top:776.23px;font-size:15.5px;color:#4e4e4e;transform:scaleX(0.9849);transform-origin:0 50%;">Budget</div>
<div class="t" id="t177" style="left:110.00px;top:837.99px;font-size:16.2px;color:#4e4e4e;transform:scaleX(0.8263);transform-origin:0 50%;">S1718EST</div>
<div class="t" id="t178" style="left:213.00px;top:837.99px;font-size:16.2px;color:#4e4e4e;transform:scaleX(0.8169);transform-origin:0 50%;">DSB</div>
<div class="t" id="t179" style="left:277.30px;top:837.99px;font-size:16.2px;color:#4e4e4e;transform:scaleX(0.9323);transform-origin:0 50%;">2017-18</div>
<div class="t" id="t180" style="left:407.30px;top:838.23px;font-size:15.5px;color:#4e4e4e;transform:scaleX(0.9315);transform-origin:0 50%;">Estimates</div>
<div class="t" id="t181" style="left:503.30px;top:837.99px;font-size:16.2px;color:#4e4e4e;transform:scaleX(0.8989);transform-origin:0 50%;">V20</div>
<div class="t" id="t182" style="left:587.00px;top:837.99px;font-size:16.2px;color:#4e4e4e;transform:scaleX(0.8667);transform-origin:0 50%;">SC0300</div>
<div class="t" id="t183" style="left:687.00px;top:838.23px;font-size:15.5px;color:#4e4e4e;transform:scaleX(0.9388);transform-origin:0 50%;">Sch. 03: Capital Expenditures</div>
<div class="t" id="t184" style="left:1027.00px;top:837.99px;font-size:16.2px;color:#4e4e4e;transform:scaleX(0.8839);transform-origin:0 50%;">SC030050003</div>
<div class="t" id="t185" style="left:1151.30px;top:838.23px;font-size:15.5px;color:#4e4e4e;transform:scaleX(0.9536);transform-origin:0 50%;">Capital Expenditures</div>
<div class="t" id="t186" style="left:1426.00px;top:838.23px;font-size:15.5px;color:#4e4e4e;transform:scaleX(0.9634);transform-origin:0 50%;">Capital Expenditures - All Categories</div>
<div class="t" id="t187" style="left:1762.30px;top:828.23px;font-size:15.5px;color:#4e4e4e;transform:scaleX(0.9806);transform-origin:0 50%;">New School Condition Improvement - Restricted</div>
<div class="t" id="t188" style="left:1762.30px;top:847.99px;font-size:16.2px;color:#4e4e4e;transform:scaleX(0.8891);transform-origin:0 50%;">(70%)</div>
<div class="t" id="t189" style="left:110.00px;top:899.99px;font-size:16.2px;color:#4e4e4e;transform:scaleX(0.8263);transform-origin:0 50%;">S1718EST</div>
<div class="t" id="t190" style="left:213.00px;top:899.99px;font-size:16.2px;color:#4e4e4e;transform:scaleX(0.8169);transform-origin:0 50%;">DSB</div>
<div class="t" id="t191" style="left:277.30px;top:899.99px;font-size:16.2px;color:#4e4e4e;transform:scaleX(0.9323);transform-origin:0 50%;">2017-18</div>
<div class="t" id="t192" style="left:407.30px;top:900.23px;font-size:15.5px;color:#4e4e4e;transform:scaleX(0.9315);transform-origin:0 50%;">Estimates</div>
<div class="t" id="t193" style="left:503.30px;top:899.99px;font-size:16.2px;color:#4e4e4e;transform:scaleX(0.8989);transform-origin:0 50%;">V20</div>
<div class="t" id="t194" style="left:587.00px;top:899.99px;font-size:16.2px;color:#4e4e4e;transform:scaleX(0.8667);transform-origin:0 50%;">SC0300</div>
<div class="t" id="t195" style="left:687.00px;top:900.23px;font-size:15.5px;color:#4e4e4e;transform:scaleX(0.9388);transform-origin:0 50%;">Sch. 03: Capital Expenditures</div>
<div class="t" id="t196" style="left:1027.00px;top:899.99px;font-size:16.2px;color:#4e4e4e;transform:scaleX(0.8839);transform-origin:0 50%;">SC030050005</div>
<div class="t" id="t197" style="left:1151.30px;top:900.23px;font-size:15.5px;color:#4e4e4e;transform:scaleX(0.9677);transform-origin:0 50%;">Capitalized Interest</div>
<div class="t" id="t198" style="left:1426.00px;top:890.23px;font-size:15.5px;color:#4e4e4e;transform:scaleX(0.9814);transform-origin:0 50%;">Buildings and Other Non-Moveable Type</div>
<div class="t" id="t199" style="left:1426.00px;top:910.23px;font-size:15.5px;color:#4e4e4e;transform:scaleX(0.9072);transform-origin:0 50%;">Assets</div>
<div class="t" id="t200" style="left:1762.30px;top:890.23px;font-size:15.5px;color:#4e4e4e;transform:scaleX(0.9806);transform-origin:0 50%;">New School Condition Improvement - Restricted</div>
<div class="t" id="t201" style="left:1762.30px;top:909.99px;font-size:16.2px;color:#4e4e4e;transform:scaleX(0.8891);transform-origin:0 50%;">(70%)</div>
<div class="t" id="t202" style="left:110.00px;top:961.99px;font-size:16.2px;color:#4e4e4e;transform:scaleX(0.8263);transform-origin:0 50%;">S1718EST</div>
<div class="t" id="t203" style="left:213.00px;top:961.99px;font-size:16.2px;color:#4e4e4e;transform:scaleX(0.8169);transform-origin:0 50%;">DSB</div>
<div class="t" id="t204" style="left:277.30px;top:961.99px;font-size:16.2px;color:#4e4e4e;transform:scaleX(0.9323);transform-origin:0 50%;">2017-18</div>
<div class="t" id="t205" style="left:407.30px;top:962.23px;font-size:15.5px;color:#4e4e4e;transform:scaleX(0.9315);transform-origin:0 50%;">Estimates</div>
<div class="t" id="t206" style="left:503.30px;top:961.99px;font-size:16.2px;color:#4e4e4e;transform:scaleX(0.8989);transform-origin:0 50%;">V20</div>
<div class="t" id="t207" style="left:587.00px;top:961.99px;font-size:16.2px;color:#4e4e4e;transform:scaleX(0.8667);transform-origin:0 50%;">SC0300</div>
<div class="t" id="t208" style="left:687.00px;top:962.23px;font-size:15.5px;color:#4e4e4e;transform:scaleX(0.9388);transform-origin:0 50%;">Sch. 03: Capital Expenditures</div>
<div class="t" id="t209" style="left:1027.00px;top:961.99px;font-size:16.2px;color:#4e4e4e;transform:scaleX(0.8839);transform-origin:0 50%;">SC030050002</div>
<div class="t" id="t210" style="left:1151.30px;top:962.23px;font-size:15.5px;color:#4e4e4e;transform:scaleX(0.9536);transform-origin:0 50%;">Capital Expenditures</div>
<div class="t" id="t211" style="left:1426.00px;top:952.23px;font-size:15.5px;color:#4e4e4e;transform:scaleX(0.9814);transform-origin:0 50%;">Buildings and Other Non-Moveable Type</div>
<div class="t" id="t212" style="left:1426.00px;top:972.23px;font-size:15.5px;color:#4e4e4e;transform:scaleX(0.9072);transform-origin:0 50%;">Assets</div>
<div class="t" id="t213" style="left:1762.30px;top:952.23px;font-size:15.5px;color:#4e4e4e;transform:scaleX(0.9806);transform-origin:0 50%;">New School Condition Improvement - Restricted</div>
<div class="t" id="t214" style="left:1762.30px;top:971.99px;font-size:16.2px;color:#4e4e4e;transform:scaleX(0.8891);transform-origin:0 50%;">(70%)</div>
<div class="t" id="t215" style="left:42.30px;top:1016.23px;font-size:15.5px;color:#6b6b6b;transform:scaleX(0.9871);transform-origin:0 50%;">1 - 5 of 5</div>

</body>
</html>
